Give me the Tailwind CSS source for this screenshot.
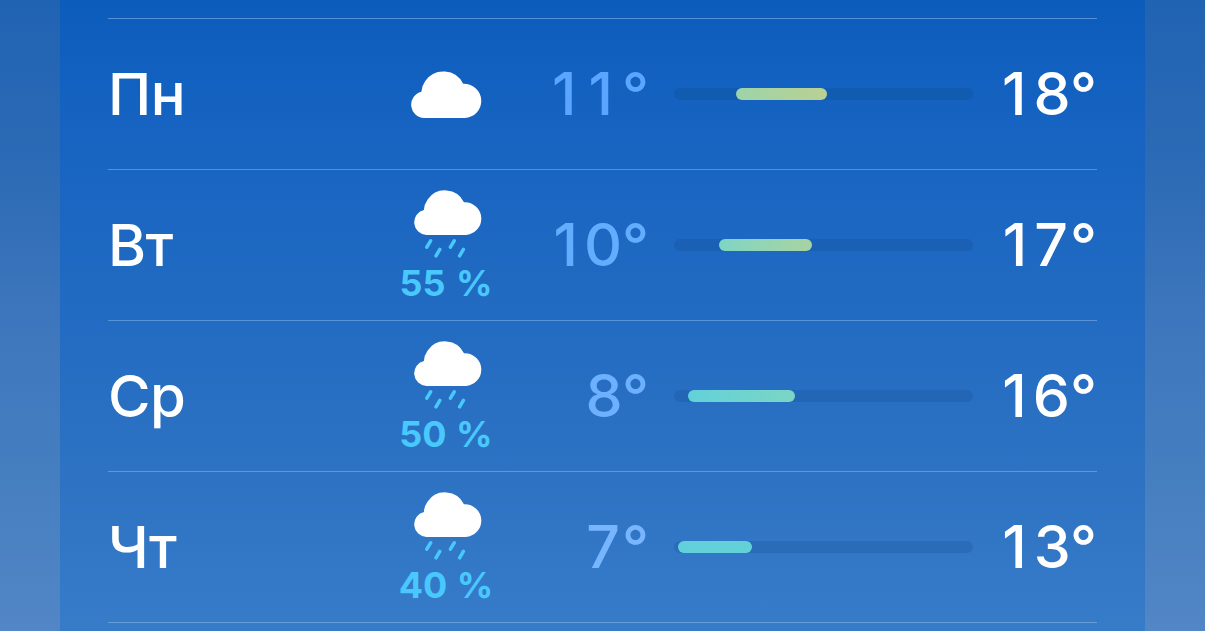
<!DOCTYPE html>
<html lang="ru">
<head>
  <meta charset="UTF-8" />
  <meta name="viewport" content="width=device-width, initial-scale=1.0"/>
  <title>Прогноз погоды</title>
  <script src="https://cdn.jsdelivr.net/npm/@tailwindcss/browser@4"></script>
</head>
<body class="h-screen overflow-hidden bg-[linear-gradient(180deg,#2163b3_0%,#2b6ab5_25%,#3d76bc_50%,#467fc0_76%,#5286c6_100%)] font-['Inter','Noto_Sans',sans-serif] text-white">
  <!-- shared icons -->
  <svg class="hidden">
    <symbol id="cloud" viewBox="0.4 0.3 70.2 46.7" preserveAspectRatio="none">
      <path d="M13.3 47A13.2 13.2 0 0 1 10.6 21Q10.8 15.5 14.5 10.2A21.7 21.7 0 0 1 52 13A17 17 0 1 1 53.7 47Z"/>
    </symbol>
    <symbol id="rain" viewBox="0 0 68 68">
      <use href="#cloud" x="0" y="0" width="68" height="45"/>
      <path d="M16.6 50.8 12.8 57.2M25.8 59.4 22 65.8M40.2 50.8 36.4 57.2M49.4 59.4 45.6 65.8" fill="none" stroke="#48c8fd" stroke-width="3.5" stroke-linecap="round"/>
    </symbol>
  </svg>

  <main class="mx-[60px] h-full bg-[linear-gradient(180deg,#0c5cbc_0%,#1663c1_20%,#1c67c1_35%,#236cc2_53%,#2e73c3_76%,#377cc9_100%)] px-12">
    <div class="h-[19px] border-b border-[#5591d9]"></div>

    <div class="grid h-[151px] grid-cols-[278px_120px_143px_299px_1fr] items-center border-b border-[#5591d9] text-[59px] leading-none font-medium">
      <span class="text-[58px] leading-none tracking-[-0.5px]">Пн</span>
      <svg class="ml-[25px] h-[47px] w-[71px] fill-white"><use href="#cloud"/></svg>
      <span class="pb-px text-right text-[#5aa5ff]"><span class="tracking-[12px]">1</span><span class="tracking-[9px]">1</span>°</span>
      <div class="ml-[25px] h-3 w-[299px] rounded-full bg-[#115bb1] pl-[62px]">
        <div class="h-3 w-[91px] rounded-full bg-linear-to-r from-[#9cd4a9] to-[#bad092]"></div>
      </div>
      <span class="pb-px text-right"><span class="tracking-[7px]">1</span>8°</span>
    </div>

    <div class="grid h-[151px] grid-cols-[278px_120px_143px_299px_1fr] items-center border-b border-[#5892d9] text-[59px] leading-none font-medium">
      <span class="text-[58px] leading-none tracking-[-0.5px]">Вт</span>
      <div class="flex flex-col items-center gap-[7px]">
        <svg class="ml-1 h-[68px] w-[68px] fill-white"><use href="#rain"/></svg>
        <span class="text-4xl leading-none font-bold [word-spacing:2px] whitespace-nowrap text-[#48c8fd]">55 %</span>
      </div>
      <span class="pb-px text-right text-[#63adff]"><span class="tracking-[6px]">1</span>0°</span>
      <div class="ml-[25px] h-3 w-[299px] rounded-full bg-[#1a60b4] pl-[45px]">
        <div class="h-3 w-[93px] rounded-full bg-linear-to-r from-[#7dd5c5] to-[#a8d3a0]"></div>
      </div>
      <span class="pb-px text-right"><span class="tracking-[7px]">1</span><span class="tracking-[2px]">7</span>°</span>
    </div>

    <div class="grid h-[151px] grid-cols-[278px_120px_143px_299px_1fr] items-center border-b border-[#5f98da] text-[59px] leading-none font-medium">
      <span class="text-[58px] leading-none tracking-[-0.5px]">Ср</span>
      <div class="flex flex-col items-center gap-[7px]">
        <svg class="ml-1 h-[68px] w-[68px] fill-white"><use href="#rain"/></svg>
        <span class="text-4xl leading-none font-bold [word-spacing:1px] whitespace-nowrap text-[#48c8fd]">50 %</span>
      </div>
      <span class="pb-px text-right text-[#6cb0ff]">8°</span>
      <div class="ml-[25px] h-3 w-[299px] rounded-full bg-[#2366b6] pl-[14px]">
        <div class="h-3 w-[107px] rounded-full bg-linear-to-r from-[#62d1d9] to-[#7bd5c5]"></div>
      </div>
      <span class="pb-px text-right"><span class="tracking-[6px]">1</span>6°</span>
    </div>

    <div class="grid h-[151px] grid-cols-[278px_120px_143px_299px_1fr] items-center border-b border-[#659ddb] text-[59px] leading-none font-medium">
      <span class="text-[58px] leading-none tracking-[-0.5px]">Чт</span>
      <div class="flex flex-col items-center gap-[7px]">
        <svg class="ml-1 h-[68px] w-[68px] fill-white"><use href="#rain"/></svg>
        <span class="text-4xl leading-none font-bold [word-spacing:1px] whitespace-nowrap text-[#48c8fd]">40 %</span>
      </div>
      <span class="pb-px text-right text-[#77b6ff]"><span class="tracking-[2px]">7</span>°</span>
      <div class="ml-[25px] h-3 w-[299px] rounded-full bg-[#2b6cb8] pl-[4px]">
        <div class="h-3 w-[74px] rounded-full bg-linear-to-r from-[#62d0db] to-[#62d2d7]"></div>
      </div>
      <span class="pb-px text-right"><span class="tracking-[7px]">1</span>3°</span>
    </div>
  </main>
</body>
</html>
